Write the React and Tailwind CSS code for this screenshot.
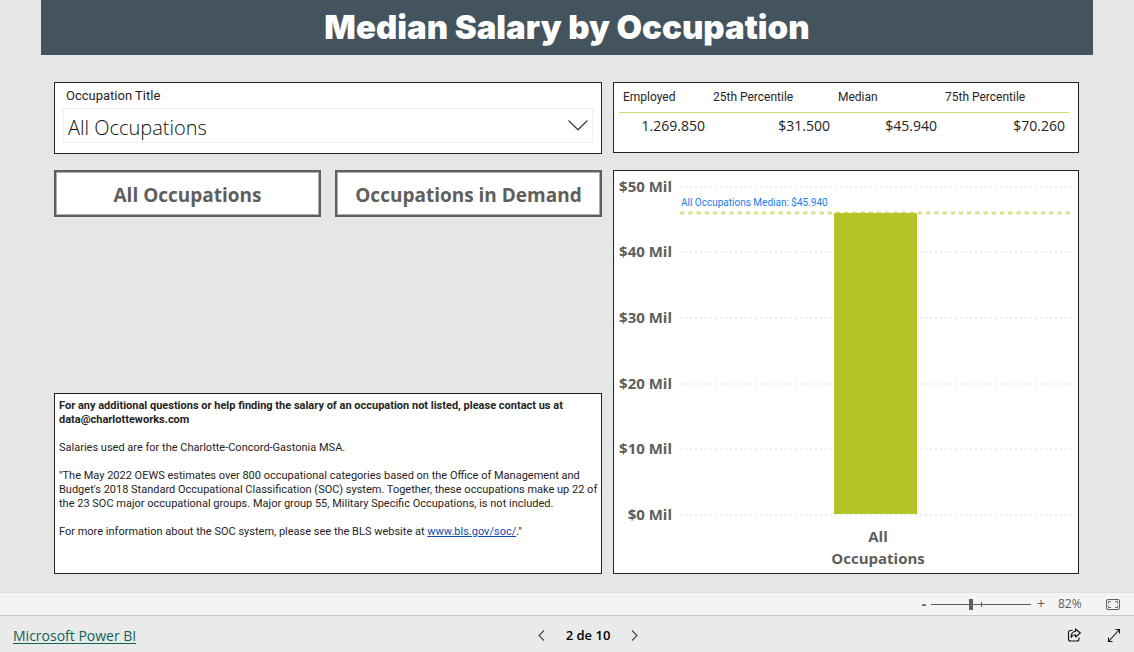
import React from "react";

const metrics = [
  { label: "Employed", value: "1.269.850", width: "w-[90px]" },
  { label: "25th Percentile", value: "$31.500", width: "w-[125px]" },
  { label: "Median", value: "$45.940", width: "w-[107px]" },
  { label: "75th Percentile", value: "$70.260", width: "w-auto" },
];

const ticks = [
  { label: "$50 Mil", y: 16 },
  { label: "$40 Mil", y: 81 },
  { label: "$30 Mil", y: 147 },
  { label: "$20 Mil", y: 213 },
  { label: "$10 Mil", y: 278 },
  { label: "$0 Mil", y: 344 },
];

function Header() {
  return (
    <header className="mx-[41px] flex h-[55px] items-center justify-center bg-[#44545f] pb-[2px]">
      <h1 className="font-['Inter',sans-serif] text-[33px] leading-10 font-black text-white">
        Median Salary by Occupation
      </h1>
    </header>
  );
}

function OccupationFilter() {
  return (
    <section className="h-[72px] border border-[#252423] bg-white px-2 pt-1">
      <label
        htmlFor="occupation"
        className="block pl-[3px] font-['Roboto',sans-serif] text-[13px] leading-[18px] text-[#252423]"
      >
        Occupation Title
      </label>
      <div className="relative mt-[3px]">
        <select
          id="occupation"
          className="block h-[35px] w-full appearance-none border border-[#eeeeee] bg-white pt-1 pl-1 text-[20px] font-light text-[#111111]"
        >
          <option>All Occupations</option>
        </select>
        <svg
          className="pointer-events-none absolute top-3 right-[5px] h-[11px] w-5"
          viewBox="0 0 20 11"
          fill="none"
          stroke="#4a3a33"
          strokeWidth="1.2"
          aria-hidden="true"
        >
          <path d="M0.5 0.5 10 9.8 19.5 0.5" />
        </svg>
      </div>
    </section>
  );
}

function ViewButton({ children }) {
  return (
    <button
      type="button"
      className="h-[47px] flex-1 border-2 border-[#605e5c] bg-white pt-[2px] text-[19px] leading-6 font-bold text-[#605e5c] shadow-[inset_0_0_0_1px_#b0aeac]"
    >
      {children}
    </button>
  );
}

function Notes() {
  return (
    <section className="mt-auto h-[181px] border border-[#252423] bg-white pt-[5px] pl-1 font-['Roboto',sans-serif] text-[11px] leading-[14px] text-[#252423]">
      <p className="font-bold">
        For any additional questions or help finding the salary of an occupation not listed, please contact us at
        data@charlotteworks.com
      </p>
      <p className="mt-[14px]">Salaries used are for the Charlotte-Concord-Gastonia MSA.</p>
      <p className="mt-[14px]">
        "The May 2022 OEWS estimates over 800 occupational categories based on the Office of Management and
        Budget's 2018 Standard Occupational Classification (SOC) system. Together, these occupations make up 22 of
        the 23 SOC major occupational groups. Major group 55, Military Specific Occupations, is not included.
      </p>
      <p className="mt-[14px]">
        For more information about the SOC system, please see the BLS website at{" "}
        <a href="https://www.bls.gov/soc/" className="text-[#0f4aa8] underline">
          www.bls.gov/soc/
        </a>
        ."
      </p>
    </section>
  );
}

function MetricsTable() {
  return (
    <section className="h-[71px] border border-[#252423] bg-white pr-[9px] pl-[5px]">
      <table className="w-full table-fixed border-collapse text-[#252423]">
        <thead>
          <tr className="h-[29px]">
            {metrics.map((m) => (
              <th
                key={m.label}
                scope="col"
                className={`${m.width} border-b border-[#d0db72] px-1 text-left font-['Roboto',sans-serif] text-xs font-normal`}
              >
                {m.label}
              </th>
            ))}
          </tr>
        </thead>
        <tbody>
          <tr className="h-[26px]">
            {metrics.map((m) => (
              <td key={m.label} className="px-1 text-right text-[14px]">
                {m.value}
              </td>
            ))}
          </tr>
        </tbody>
      </table>
    </section>
  );
}

function SalaryChart() {
  return (
    <section className="border border-[#252423] bg-white">
      <svg className="block h-auto w-full" viewBox="0 0 464 402" role="img" aria-label="Median salary by occupation">
        {ticks.map((t) => (
          <g key={t.label}>
            <text x="58" y={t.y + 5} textAnchor="end" fontSize="15" fontWeight="700" fill="#605e5c">
              {t.label}
            </text>
            <path d={`M66 ${t.y}H458`} stroke="#dddddd" strokeWidth="1" strokeDasharray="2 3" />
          </g>
        ))}
        <path d="M66 42H458" stroke="#dae291" strokeWidth="3" strokeDasharray="4.5 3.7" />
        <rect x="220" y="42" width="83" height="301" fill="#b5c429" />
        <text x="67" y="35" fontSize="10" fill="#1a7cf0" className="font-['Roboto',sans-serif]">
          All Occupations Median: $45.940
        </text>
        <g textAnchor="middle" fontSize="15" fontWeight="700" fill="#605e5c">
          <text x="264" y="371">All</text>
          <text x="264" y="393">Occupations</text>
        </g>
      </svg>
    </section>
  );
}

function ZoomBar() {
  return (
    <div className="flex h-6 items-center justify-end border-t border-b border-t-[#dedede] border-b-[#c8c8c8] bg-[#f4f4f4] pr-[14px] text-[#605e5c]">
      <button type="button" aria-label="Zoom out" className="w-[14px] text-sm leading-5 font-bold">
        -
      </button>
      <div className="relative flex h-[11px] w-[100px] items-center">
        <span className="absolute top-[3px] left-1/2 h-[5px] w-px bg-[#605e5c]" />
        <input
          type="range"
          min="0"
          max="100"
          defaultValue="40"
          aria-label="Zoom"
          className="relative h-[11px] w-full appearance-none bg-transparent [&::-webkit-slider-runnable-track]:h-px [&::-webkit-slider-runnable-track]:bg-[#605e5c] [&::-webkit-slider-thumb]:-mt-[5px] [&::-webkit-slider-thumb]:h-[11px] [&::-webkit-slider-thumb]:w-1 [&::-webkit-slider-thumb]:appearance-none [&::-webkit-slider-thumb]:bg-[#605e5c]"
        />
      </div>
      <button type="button" aria-label="Zoom in" className="ml-[3px] w-[14px] text-sm leading-5">
        +
      </button>
      <span className="ml-[10px] w-[26px] text-xs leading-5">82%</span>
      <button type="button" aria-label="Fit to page" className="ml-[22px]">
        <svg className="block h-[11px] w-[14px]" viewBox="0 0 14 11" fill="none" stroke="#605e5c" aria-hidden="true">
          <rect x="0.5" y="0.5" width="13" height="10" rx="1.5" />
          <path d="M5 2.5H2.5V4.5M9 2.5H11.5V4.5M5 8.5H2.5V6.5M9 8.5H11.5V6.5" strokeWidth="0.9" />
        </svg>
      </button>
    </div>
  );
}

function Footer() {
  return (
    <footer className="grid h-9 grid-cols-3 items-center bg-[#eaeaea] px-[13px] pt-[2px] text-black">
      <a
        href="https://powerbi.microsoft.com"
        className="justify-self-start pt-[2px] text-[14px] leading-5 text-[#0f6358] underline underline-offset-2"
      >
        Microsoft Power BI
      </a>
      <nav aria-label="Pages" className="flex items-center justify-center gap-[21px] pl-[42px]">
        <button type="button" aria-label="Previous page">
          <svg className="block h-[11px] w-[7px]" viewBox="0 0 7 11" fill="none" stroke="#444" strokeWidth="1.1" aria-hidden="true">
            <path d="M6 0.5 1 5.5 6 10.5" />
          </svg>
        </button>
        <span className="text-[13px] leading-5 font-semibold">2 de 10</span>
        <button type="button" aria-label="Next page">
          <svg className="block h-[11px] w-[7px]" viewBox="0 0 7 11" fill="none" stroke="#444" strokeWidth="1.1" aria-hidden="true">
            <path d="M1 0.5 6 5.5 1 10.5" />
          </svg>
        </button>
      </nav>
      <div className="flex items-center gap-[26px] justify-self-end">
        <button type="button" aria-label="Share">
          <svg className="block h-[14px] w-[14px]" viewBox="0 0 14 14" fill="none" stroke="#111" strokeWidth="1.1" strokeLinejoin="round" aria-hidden="true">
            <path d="M5.5 2.5H3.5Q1.5 2.5 1.5 4.5V11Q1.5 13 3.5 13H10Q12 13 12 11V9.5" />
            <path d="M8.5 1 13.3 5 8.5 9V6.8C6.5 6.7 5.2 7.6 4 9.4 4.1 6.2 5.8 3.7 8.5 3.3Z" />
          </svg>
        </button>
        <button type="button" aria-label="Full screen">
          <svg className="block h-[14px] w-[14px]" viewBox="0 0 14 14" fill="none" stroke="#111" strokeWidth="1.1" aria-hidden="true">
            <path d="M1.5 13.5 12.5 1.5M8.5 1.5H12.5V5.5M1.5 9.5V13.5H5.5" />
          </svg>
        </button>
      </div>
    </footer>
  );
}

export default function App() {
  return (
    <div className="flex min-h-screen flex-col bg-[#e6e6e6] font-['Open_Sans','Noto_Sans',sans-serif]">
      <Header />
      <main className="grid flex-1 grid-cols-[548fr_466fr] content-start gap-x-[11px] pt-[27px] pr-[55px] pb-[18px] pl-[54px]">
        <div className="flex flex-col gap-4">
          <OccupationFilter />
          <div className="flex gap-[14px]">
            <ViewButton>All Occupations</ViewButton>
            <ViewButton>Occupations in Demand</ViewButton>
          </div>
          <Notes />
        </div>
        <div className="flex flex-col gap-[17px]">
          <MetricsTable />
          <SalaryChart />
        </div>
      </main>
      <ZoomBar />
      <Footer />
    </div>
  );
}
